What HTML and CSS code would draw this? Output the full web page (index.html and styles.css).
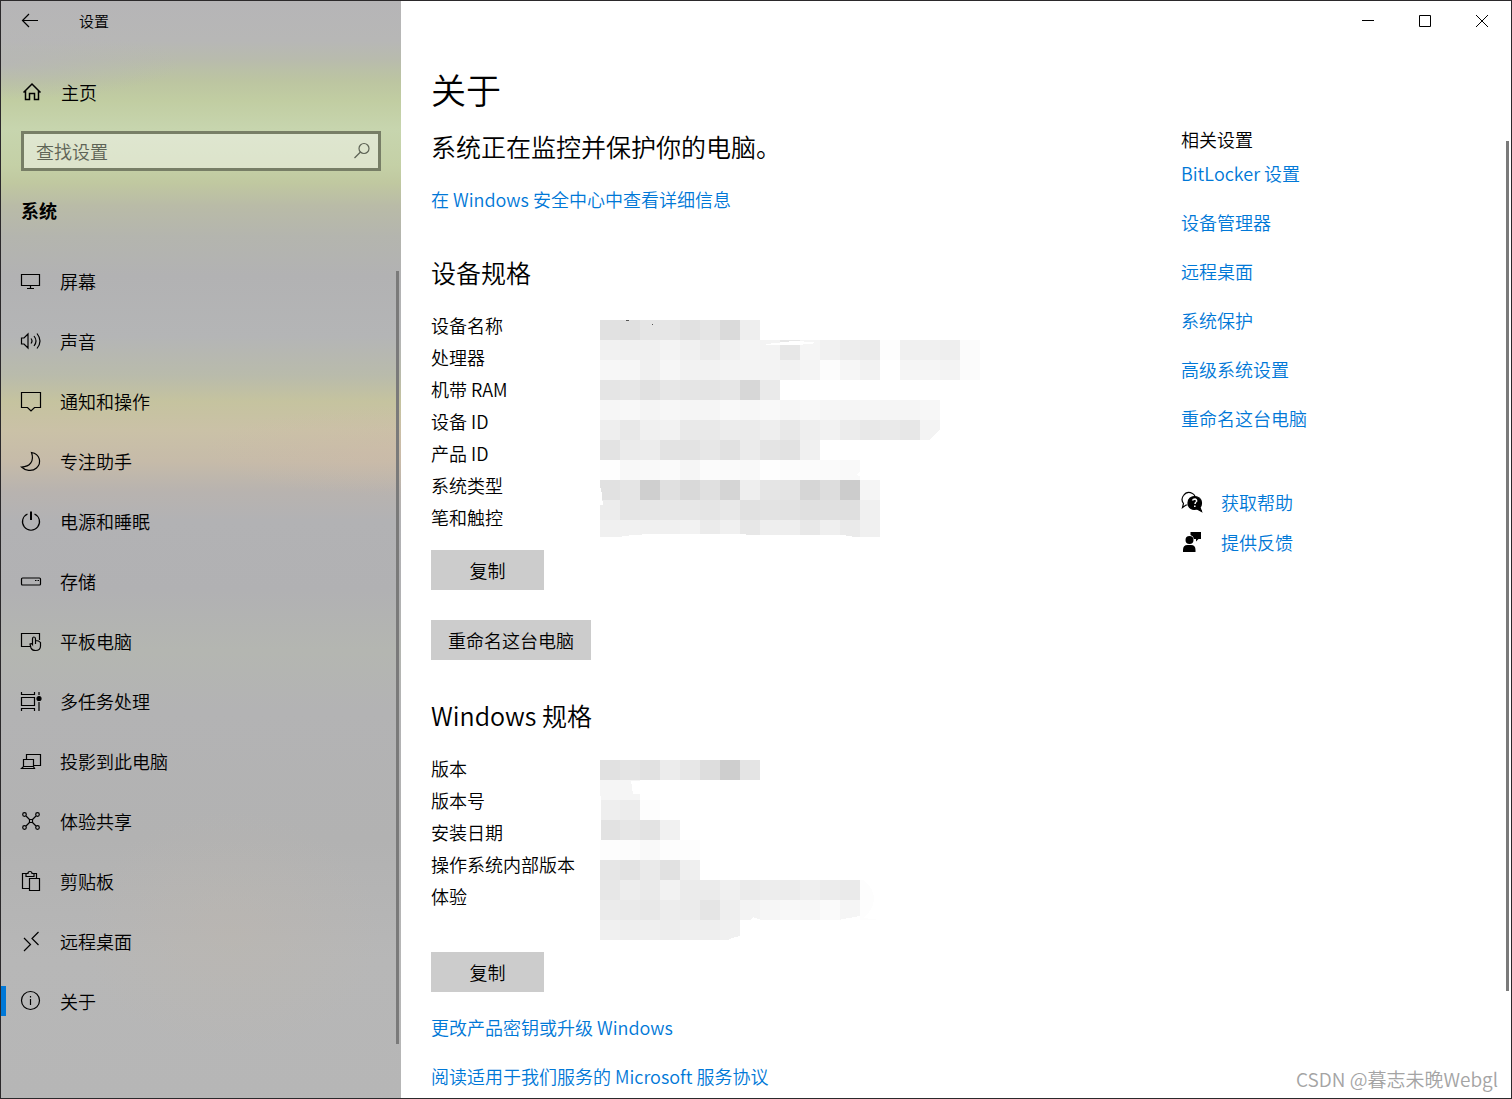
FILE: index.html
```html
<!DOCTYPE html>
<html lang="zh-CN">
<head>
<meta charset="utf-8">
<meta name="viewport" content="width=device-width, initial-scale=1">
<title>设置</title>
<link rel="stylesheet" href="styles.css">
</head>
<body>
<div class="window">
  <aside class="sidebar">
    <header class="sidebar-title">
      <button class="back" type="button" aria-label="返回"><svg class="icon" viewBox="0 0 22 22"><path d="M19 10.500H4M10 4L3.500 10.500 10 17"/></svg></button>
      <span class="app-name">设置</span>
    </header>
    <a class="home" href="#">
      <svg class="icon" viewBox="0 0 22 22"><path d="M2.500 11.500L11 3l8.500 8.500M4.500 10v8.500h4v-6h5v6h4V10" stroke-width="1.500"/></svg>
      <span>主页</span>
    </a>
    <form class="search">
      <input class="search-input" type="text" placeholder="查找设置" aria-label="查找设置">
      <svg class="search-icon" viewBox="0 0 18 18"><circle cx="11" cy="6.500" r="5"/><path d="M7.500 10L1.500 16"/></svg>
    </form>
    <h2 class="group">系统</h2>
    <nav class="nav">
      <a class="nav-item" href="#"><svg class="icon" viewBox="0 0 22 22"><path d="M1.500 4.500h18v11h-18zM10.500 15.500v2.500M7 18.500h7"/></svg><span>屏幕</span></a>
      <a class="nav-item" href="#"><svg class="icon" viewBox="0 0 22 22"><path d="M1.500 8v6H4l4 4V4L4 8zM11 8.500q2 2.500 0 5M14 6q4 5 0 10M17 3.500q6 7.500 0 15"/></svg><span>声音</span></a>
      <a class="nav-item" href="#"><svg class="icon" viewBox="0 0 22 22"><path d="M1.500 2.500h19v15h-6L11 21l-3.500-3.500h-6z"/></svg><span>通知和操作</span></a>
      <a class="nav-item" href="#"><svg class="icon" viewBox="0 0 22 22"><path d="M11.500 2.500C20 4 22 13 16.500 18 12 22 5 20.500 1.500 17 10 17 14.500 11 11.500 2.500z"/></svg><span>专注助手</span></a>
      <a class="nav-item" href="#"><svg class="icon" viewBox="0 0 22 22"><path d="M7.500 4a8.500 8.500 0 1 0 7 0"/><path d="M11 1.500V10" stroke-width="2"/></svg><span>电源和睡眠</span></a>
      <a class="nav-item" href="#"><svg class="icon" viewBox="0 0 22 22"><rect x="1.500" y="8" width="19" height="7" rx="1"/><path d="M15 10.500h1.500M17.500 10.500H19"/></svg><span>存储</span></a>
      <a class="nav-item" href="#"><svg class="icon" viewBox="0 0 22 22"><path d="M10 16.500H1.500v-13h18V10M12.500 14.500V9q0-2 1.500-2t1.500 2v5-3.500q3.500 0 5 2V16q0 4.500-5 4.500-3.500 0-4.500-2.500l-1-4q1.500-1 2.500.5z"/></svg><span>平板电脑</span></a>
      <a class="nav-item" href="#"><svg class="icon" viewBox="0 0 22 22"><path d="M1.500 2v2.500h13V2M1.500 7.500h13v8h-13zM1.500 21v-2.500h13V21M19 2v3M19 12v9"/><circle class="dot" cx="19" cy="8.500" r="2"/></svg><span>多任务处理</span></a>
      <a class="nav-item" href="#"><svg class="icon" viewBox="0 0 22 22"><path d="M6.500 9V4.500h14v11H14M3.500 9.500h10v7h-10zM1.500 18.500h13l-1-2h-10z"/></svg><span>投影到此电脑</span></a>
      <a class="nav-item" href="#"><svg class="icon" viewBox="0 0 22 22"><path d="M6 6l3.500 3.500M16 6l-3.500 3.500M6 16l3.500-3.500M16 16l-3.500-3.500M9.500 9.500h3v3h-3z"/><circle cx="4.500" cy="4.500" r="1.800"/><circle cx="17.500" cy="4.500" r="1.800"/><circle cx="4.500" cy="17.500" r="1.800"/><circle cx="17.500" cy="17.500" r="1.800"/></svg><span>体验共享</span></a>
      <a class="nav-item" href="#"><svg class="icon" viewBox="0 0 22 22"><path d="M9.500 18.500h-7v-15H6M12 3.500h4.500V8M6 6.500v-3h2q0-2 2-2t2 2h2v3zM9.500 8.500h10v12h-10z"/></svg><span>剪贴板</span></a>
      <a class="nav-item" href="#"><svg class="icon" viewBox="0 0 22 22"><path d="M4 8l6.500 6.500L4 21M18.500 2L12 8.500l6.500 6.500"/></svg><span>远程桌面</span></a>
      <a class="nav-item current" href="#" aria-current="page"><svg class="icon" viewBox="0 0 22 22"><circle cx="10.500" cy="10.500" r="9"/><path d="M10.500 9v6M10.500 6v1.500"/></svg><span>关于</span></a>
    </nav>
    <div class="thumb side-thumb"></div>
  </aside>

  <main class="main">
    <header class="controls">
      <button type="button" aria-label="最小化"><svg viewBox="0 0 14 14"><path d="M1 6.500h12"/></svg></button>
      <button type="button" aria-label="最大化"><svg viewBox="0 0 14 14"><path d="M1.500 1.500h11v11h-11z"/></svg></button>
      <button type="button" aria-label="关闭"><svg viewBox="0 0 14 14"><path d="M1 1l12 12M13 1L1 13"/></svg></button>
    </header>
    <div class="columns">
      <div class="about">
        <h1>关于</h1>
        <h2 class="status">系统正在监控并保护你的电脑。</h2>
        <a class="link" href="#">在 Windows 安全中心中查看详细信息</a>
        <section class="device">
          <h2>设备规格</h2>
          <div class="specs">
            <ul class="labels">
              <li>设备名称</li><li>处理器</li><li>机带 RAM</li><li>设备 ID</li><li>产品 ID</li><li>系统类型</li><li>笔和触控</li>
            </ul>
            <svg class="mosaic device-mosaic" id="device-values" viewBox="0 0 400 217"><g class="cells"></g>
              <path class="gap" d="M166 24l28-3 20 1-1 2-20 1-27 0zM340 109v11h-10zM257 155l4-5v7zM0 168h1l2 17H0zM22 217v-1l26-2 195 1 12 2z"/>
              <path class="speck" d="M26 0h3v1h-3zM52 4h1v1h-1z"/>
            </svg>
          </div>
          <button class="button" type="button">复制</button>
          <button class="button rename" type="button">重命名这台电脑</button>
        </section>
        <section class="edition">
          <h2>Windows 规格</h2>
          <div class="specs">
            <ul class="labels">
              <li>版本</li><li>版本号</li><li>安装日期</li><li>操作系统内部版本</li><li>体验</li>
            </ul>
            <svg class="mosaic edition-mosaic" id="edition-values" viewBox="0 0 400 180"><g class="cells"></g>
              <path class="gap" d="M31 21h9v13h-7zM0 36h1v44H0zM129 180v-1l11-3v4zM151 160l2-3 8 3zM238 160l22-4v4zM264 120q20 18 0 38l16 2v-40z"/>
            </svg>
          </div>
          <button class="button" type="button">复制</button>
        </section>
        <div class="more">
          <a class="link" href="#">更改产品密钥或升级 Windows</a>
          <a class="link" href="#">阅读适用于我们服务的 Microsoft 服务协议</a>
        </div>
      </div>
      <aside class="related">
        <h3>相关设置</h3>
        <div class="related-links">
          <a class="link" href="#">BitLocker 设置</a>
          <a class="link" href="#">设备管理器</a>
          <a class="link" href="#">远程桌面</a>
          <a class="link" href="#">系统保护</a>
          <a class="link" href="#">高级系统设置</a>
          <a class="link" href="#">重命名这台电脑</a>
        </div>
        <div class="support">
          <a class="link" href="#"><svg class="icon" viewBox="0 0 22 22"><path d="M6.500 14H5l-3.500 2.500 1-4Q-.5 8.500 2.500 4.500 6-.5 11.500 2.500q2 1 2.500 3"/><path class="dot" d="M13.500 5.500c4 0 7 2.500 7 6.500q0 2.500-1.500 4.500l1.500 4-4.500-2.500c-5 1.500-9-1.500-9-6 0-4 3-6.500 6.500-6.500z"/><path class="light" d="M11.500 9.500q.5-1.500 2.500-1.500 2 .5 1.500 2.500-1.500 1-1.500 2.500M13.800 14.500V16"/></svg><span>获取帮助</span></a>
          <a class="link" href="#"><svg class="icon" viewBox="0 0 22 22"><path class="fill" d="M9.500 1H20v7h-2.500L15 10.500V8h-2Q12.500 5 9.500 4zM8.500 5a4 4 0 1 1 0 8 4 4 0 0 1 0-8zM2 21v-2q0-5 4.500-5h3.500q4.500 0 4.500 5v2z"/></svg><span>提供反馈</span></a>
        </div>
      </aside>
    </div>
    <div class="thumb main-thumb"></div>
    <div class="watermark">CSDN @暮志未晚Webgl</div>
  </main>
</div>
<script src="mosaic.js"></script>
</body>
</html>
```
FILE: styles.css
```css
* { box-sizing: border-box; }

body {
  margin: 0;
  font: 350 18px/24px "Noto Sans CJK SC", "Noto Sans", sans-serif;
  color: #000;
}

h1, h2, h3, ul { margin: 0; padding: 0; font-weight: inherit; }
ul { list-style: none; }
a { color: inherit; text-decoration: none; }
button, input { font: inherit; color: inherit; border: 0; border-radius: 0; padding: 0; background: none; }

.window {
  display: flex;
  height: 100vh;
  border: 1px solid #2b292b;
  background: #fff;
}

.icon {
  flex: none;
  width: 22px;
  height: 22px;
  fill: none;
  stroke: #000;
  stroke-width: 1.2;
}
.icon .dot { fill: #000; }
.icon .fill { fill: #000; stroke: none; }
.icon .light { stroke: #fff; stroke-width: 1.5; }

/* Sidebar */
.sidebar {
  position: relative;
  flex: none;
  width: 400px;
  overflow: hidden;
  background:
    radial-gradient(ellipse 180px 36px at 0 62px, rgba(182, 181, 184, .7), transparent),
    radial-gradient(ellipse 200px 45px at 400px 450px, rgba(208, 186, 168, .4), transparent),
    radial-gradient(ellipse 150px 120px at 230px 930px, rgba(188, 182, 174, .5), transparent),
    linear-gradient(#b6b5b7 0, #b7b7b6 40px, #b8bbad 58px, #bcc5a1 80px, #c1cda2 100px, #c7d5ae 128px, #c4d0a6 165px, #c0c8a0 182px, #b9bba7 205px, #b4b5ae 235px, #b2b2b3 275px, #b4b5b6 335px, #b9bbab 375px, #c5c39f 400px, #cac1a7 430px, #c6bba9 460px, #b8b3af 490px, #b2b2b4 520px, #b1b1b3 590px, #b4b6b1 650px, #b3b3b4 710px, #b2b2b2 840px, #b7b7b7 960px, #b6b6b6 100%);
}
.sidebar-title { display: flex; align-items: center; height: 40px; }
.back { width: 58px; height: 40px; }
.back .icon { display: block; margin: 0 auto; }
.app-name { margin-left: 20px; font-size: 15px; }
.home { display: flex; align-items: center; gap: 18px; height: 60px; margin-top: 21px; padding-left: 20px; }
.search {
  display: flex;
  align-items: center;
  height: 40px;
  margin: 9px 20px 0;
  padding: 0 7px 0 12px;
  border: 3px solid #777e66;
  background: rgba(255, 255, 255, .42);
}
.search-input { flex: 1; min-width: 0; outline: 0; }
.search-input::placeholder { color: #5d6355; opacity: 1; }
.search-icon { width: 18px; height: 18px; fill: none; stroke: #5d6355; stroke-width: 1.2; }
.group { margin: 27px 20px 0; font-size: 18px; font-weight: 700; }
.nav { margin-top: 29px; }
.nav-item { display: flex; align-items: center; gap: 18px; height: 60px; padding-left: 19px; }
.current { background: linear-gradient(#0078d7, #0078d7) 0 15px / 5px 30px no-repeat; }

.thumb { position: absolute; width: 3px; background: #7a7a7a; }
.side-thumb { right: 2px; top: 270px; bottom: 54px; }
.main-thumb { right: 2px; top: 140px; bottom: 107px; }

/* Main pane */
.main { position: relative; flex: 1; min-width: 0; overflow: hidden; }
.controls { display: flex; justify-content: flex-end; height: 40px; padding-right: 1px; }
.controls button { display: grid; place-items: center; width: 57px; }
.controls svg { width: 14px; height: 14px; fill: none; stroke: #000; }

.columns { display: flex; padding: 23px 30px 0; }
.about { flex: 0 1 750px; }
.about h1 { font-size: 35px; line-height: 50px; }
.about h2 { font-size: 25px; line-height: 34px; }
.about .status { margin: 15px 0 24px; }
.link { display: table; color: #0078d7; }
.link:hover { color: #666; }
.device { margin-top: 44px; }
.edition { margin-top: 38px; }
.specs { display: grid; grid-template-columns: 169px 1fr; margin-top: 20px; }
.labels { line-height: 32px; white-space: nowrap; }
.mosaic { width: 400px; shape-rendering: crispEdges; }
.mosaic .gap { fill: #fff; }
.mosaic .speck { fill: #555; }
.device-mosaic { height: 217px; margin-top: 11px; }
.edition-mosaic { height: 180px; margin-top: 8px; }
.button { display: block; height: 40px; min-width: 113px; padding: 0 17px; background: #ccc; }
.device .button { margin-top: 13px; }
.device .rename { margin-top: 30px; }
.edition .button { margin-top: 12px; }
.more { display: grid; gap: 25px; margin-top: 23px; }

.related { flex: 1; padding-top: 63px; }
.related h3 { font-size: 18px; }
.related-links { display: grid; gap: 25px; margin-top: 10px; }
.support { display: grid; gap: 16px; margin-top: 60px; }
.support .link { display: flex; align-items: center; gap: 18px; }

.watermark {
  position: absolute;
  right: 13px;
  bottom: 7px;
  font-size: 19px;
  color: #a4a4a4;
}
```
FILE: mosaic.js
```js
// Grey levels of the blurred-out values, one 20px cell for each hex pair.
const levels = {
  "device-values": [
    "e1e0e5e6e1e5daee",
    "f1f0f0f3f0ebf1f4f3e7f5f1edebfdf0f0eefb",
    "f7f6f0f6f2f2f3f3f3f2f4fcf6f2fff5f5f3fb",
    "e5e7e1e7e5e4e6d7ea",
    "f6f8f4f7f5f5f9f7f9f6f8f6f5f6f5f5f7",
    "eee8f0f2e9e9ecebeee8eef2ece8eae7f3",
    "e3ebece3e3e7e1ebe4e2f0",
    "fef8f9faf5fbfaf9fefcfbfaf9",
    "e1e5cfe0d9e0d5eee5e4d6ddccf5",
    "ece5e6e7e7e5e8e1e3e2e0e0dff0",
    "f0f1f0f0f2ebf0e7eeeee8efeaf0"
  ],
  "edition-values": [
    "e1e4e1ece7ddcee4",
    "f5f5",
    "eeecfd",
    "e2e6e3f1",
    "fdfcf9fdfd",
    "e6e3eae1ef",
    "e7edeaf2ebebf0ebedecefeceafd",
    "ebeae8edebe5eef3f6f8f7faf5fd",
    "f0eeefedefeef0"
  ]
};

for (const [id, rows] of Object.entries(levels)) {
  const group = document.querySelector("#" + id + " .cells");
  rows.forEach((row, y) => {
    row.match(/../g).forEach((grey, x) => {
      const cell = document.createElementNS("http://www.w3.org/2000/svg", "rect");
      cell.setAttribute("x", x * 20);
      cell.setAttribute("y", y * 20);
      cell.setAttribute("width", 20);
      cell.setAttribute("height", 20);
      cell.setAttribute("fill", "#" + grey + grey + grey);
      group.append(cell);
    });
  });
}
```
